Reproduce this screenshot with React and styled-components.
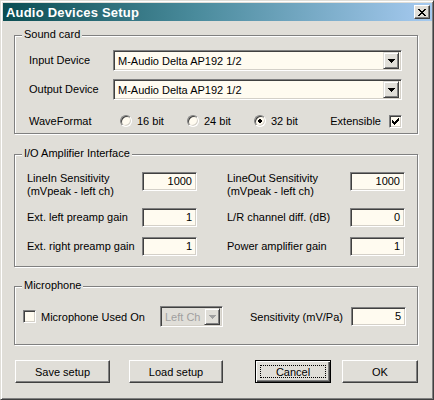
import React from 'react';
import styled, { createGlobalStyle } from 'styled-components';

const FACE = '#e0ded8';
const FIELD = '#fffbf0';

const GlobalStyle = createGlobalStyle`
  body {
    margin: 0;
    background: ${FACE};
    font-family: "Liberation Sans", Arial, sans-serif;
    font-size: 11px;
    color: #000;
  }
`;

const Window = styled.div`
  box-sizing: border-box;
  width: 434px;
  height: 400px;
  padding: 2px 1px 0 2px;
  background: ${FACE};
  border: 1px solid;
  border-color: ${FACE} #404040 #404040 ${FACE};
  box-shadow: inset 1px 1px 0 #fff, inset -1px -1px 0 #808080;
  display: flex;
  flex-direction: column;
`;

const TitleBar = styled.div`
  height: 18px;
  display: flex;
  align-items: center;
  justify-content: space-between;
  padding: 0 2px 0 3px;
  background: linear-gradient(90deg, #0b4d52 0%, #4a8b9c 45%, #a6caf0 100%);
`;

const Title = styled.span`
  color: #fff;
  font-weight: bold;
  font-size: 13px;
  letter-spacing: 0.2px;
`;

const CloseButton = styled.div`
  box-sizing: border-box;
  width: 16px;
  height: 14px;
  display: flex;
  align-items: center;
  justify-content: center;
  background: ${FACE};
  border: 1px solid;
  border-color: #fff #404040 #404040 #fff;
  box-shadow: inset -1px -1px 0 #808080;
`;

const Body = styled.div`
  display: flex;
  flex-direction: column;
  padding: 14px 0 0 11px;
`;

const Group = styled.div`
  position: relative;
  box-sizing: border-box;
  width: 404px;
  height: ${(p) => p.$h}px;
  margin-bottom: ${(p) => p.$gap || 0}px;
  border: 1px solid #808080;
  box-shadow: inset 1px 1px 0 #fff, 1px 1px 0 #fff;
  padding: ${(p) => p.$pad};
`;

const Legend = styled.span`
  position: absolute;
  top: -8px;
  left: 7px;
  padding: 0 2px;
  line-height: 13px;
  background: ${FACE};
`;

const SoundGrid = styled.div`
  display: grid;
  grid-template-columns: 84px 289px;
  grid-template-rows: 21px 21px 26px;
  row-gap: 8px;
  align-items: center;
`;

const Label = styled.span`
  white-space: nowrap;
  line-height: ${(p) => (p.$multi ? '13px' : '19px')};
`;

const Sunken = styled.div`
  box-sizing: border-box;
  border: 1px solid;
  border-color: #808080 #fff #fff #808080;
  box-shadow: inset 1px 1px 0 #404040, inset -1px -1px 0 #d4d0c8;
`;

const Combo = styled(Sunken)`
  width: ${(p) => p.$w || 289}px;
  height: 21px;
  display: flex;
  align-items: center;
  justify-content: space-between;
  padding: 2px;
  background: ${(p) => (p.$disabled ? FACE : FIELD)};
  color: ${(p) => (p.$disabled ? '#a0a0a0' : '#000')};
`;

const ComboText = styled.span`
  padding-left: 2px;
  white-space: nowrap;
`;

const ArrowButton = styled.div`
  box-sizing: border-box;
  width: 16px;
  height: 17px;
  display: flex;
  align-items: center;
  justify-content: center;
  background: ${FACE};
  border: 1px solid;
  border-color: ${FACE} #404040 #404040 ${FACE};
  box-shadow: inset 1px 1px 0 #fff, inset -1px -1px 0 #808080;
`;

const FormatRow = styled.div`
  display: flex;
  align-items: center;
  padding-left: 7px;
`;

const RadioItem = styled.div`
  width: 67px;
  display: flex;
  align-items: center;
  gap: 5px;
`;

const RadioCircle = styled.div`
  box-sizing: border-box;
  width: 12px;
  height: 12px;
  border-radius: 50%;
  border: 1px solid;
  border-color: #808080 #fff #fff #808080;
  box-shadow: inset 1px 1px 0 #404040, inset -1px -1px 0 #d4d0c8;
  background: ${FIELD};
  display: flex;
  align-items: center;
  justify-content: center;
`;

const CheckItem = styled.div`
  display: flex;
  align-items: center;
  gap: ${(p) => p.$gap}px;
  margin-left: ${(p) => p.$ml || '0'};
`;

const CheckBox = styled(Sunken)`
  width: 13px;
  height: 13px;
  display: flex;
  align-items: center;
  justify-content: center;
  background: ${FIELD};
`;

const IOGrid = styled.div`
  display: grid;
  grid-template-columns: 115px 55px 30px 123px 55px;
  row-gap: 10px;
  align-items: start;
`;

const Field = styled(Sunken)`
  width: 55px;
  height: 19px;
  padding: 0 4px;
  text-align: right;
  line-height: 17px;
  background: ${FIELD};
`;

const Spacer = styled.span``;

const MicRow = styled.div`
  display: flex;
  align-items: center;
  height: 21px;
`;

const MicSensitivity = styled.span`
  margin: 0 12px 0 27px;
  width: 89px;
  white-space: nowrap;
`;

const ButtonRow = styled.div`
  display: flex;
  padding-left: 1px;
`;

const Button = styled.div`
  box-sizing: border-box;
  width: ${(p) => p.$w}px;
  height: 23px;
  margin-right: ${(p) => p.$mr || 0}px;
  display: flex;
  align-items: center;
  justify-content: center;
  background: ${FACE};
  border: 1px solid;
  border-color: #fff #404040 #404040 #fff;
  box-shadow: inset -1px -1px 0 #808080, inset 1px 1px 0 ${FACE};
`;

const DefaultButton = styled(Button)`
  border: 1px solid #000;
  box-shadow: inset 1px 1px 0 #fff, inset -1px -1px 0 #404040, inset -2px -2px 0 #808080;
  padding: 4px;
`;

const FocusRect = styled.div`
  box-sizing: border-box;
  width: 100%;
  height: 100%;
  border: 1px dotted #000;
  display: flex;
  align-items: center;
  justify-content: center;
`;

const Glyph = ({ rows, color = '#000' }) => (
  <svg width={rows[0].length} height={rows.length} shapeRendering="crispEdges">
    {rows.flatMap((r, y) =>
      [...r].map((c, x) =>
        c === 'x' ? <rect key={`${x}-${y}`} x={x} y={y} width="1" height="1" fill={color} /> : null
      )
    )}
  </svg>
);

const X_ROWS = ['xx....xx', '.xx..xx.', '..xxxx..', '...xx...', '..xxxx..', '.xx..xx.', 'xx....xx'];
const ARROW_ROWS = ['xxxxxxx', '.xxxxx.', '..xxx..', '...x...'];
const CHECK_ROWS = ['......x', '.....xx', 'x...xxx', 'xx.xxx.', 'xxxxx..', '.xxx...', '..x....'];
const DOT_ROWS = ['.xx.', 'xxxx', 'xxxx', '.xx.'];

const DropDown = ({ text, w, disabled }) => (
  <Combo $w={w} $disabled={disabled}>
    <ComboText>{text}</ComboText>
    <ArrowButton>
      <Glyph rows={ARROW_ROWS} color={disabled ? '#a0a0a0' : '#000'} />
    </ArrowButton>
  </Combo>
);

const Radio = ({ label, checked }) => (
  <RadioItem>
    <RadioCircle>{checked && <Glyph rows={DOT_ROWS} />}</RadioCircle>
    <span>{label}</span>
  </RadioItem>
);

const ioRows = [
  ['LineIn Sensitivity\n(mVpeak - left ch)', '1000', 'LineOut Sensitivity\n(mVpeak - left ch)', '1000'],
  ['Ext. left preamp gain', '1', 'L/R channel diff. (dB)', '0'],
  ['Ext. right preamp gain', '1', 'Power amplifier gain', '1'],
];

const IOLabel = ({ text }) => {
  const lines = text.split('\n');
  return (
    <Label $multi={lines.length > 1}>
      {lines.map((l, i) => (
        <React.Fragment key={i}>
          {i > 0 && <br />}
          {l}
        </React.Fragment>
      ))}
    </Label>
  );
};

const App = () => (
  <>
    <GlobalStyle />
    <Window>
      <TitleBar>
        <Title>Audio Devices Setup</Title>
        <CloseButton>
          <Glyph rows={X_ROWS} />
        </CloseButton>
      </TitleBar>
      <Body>
        <Group $h={99} $gap={20} $pad="14px 14px 0 14px">
          <Legend>Sound card</Legend>
          <SoundGrid>
            <Label>Input Device</Label>
            <DropDown text="M-Audio Delta AP192 1/2" />
            <Label>Output Device</Label>
            <DropDown text="M-Audio Delta AP192 1/2" />
            <Label>WaveFormat</Label>
            <FormatRow>
              <Radio label="16 bit" />
              <Radio label="24 bit" />
              <Radio label="32 bit" checked />
              <CheckItem $gap={8} $ml="auto">
                <span>Extensible</span>
                <CheckBox>
                  <Glyph rows={CHECK_ROWS} />
                </CheckBox>
              </CheckItem>
            </FormatRow>
          </SoundGrid>
        </Group>

        <Group $h={113} $gap={19} $pad="17px 13px 0 12px">
          <Legend>I/O Amplifier Interface</Legend>
          <IOGrid>
            {ioRows.map(([l1, v1, l2, v2]) => (
              <React.Fragment key={l1}>
                <IOLabel text={l1} />
                <Field>{v1}</Field>
                <Spacer />
                <IOLabel text={l2} />
                <Field>{v2}</Field>
              </React.Fragment>
            ))}
          </IOGrid>
        </Group>

        <Group $h={59} $gap={15} $pad="19px 11px 0 8px">
          <Legend>Microphone</Legend>
          <MicRow>
            <CheckItem $gap={5}>
              <CheckBox />
              <span>Microphone Used On</span>
            </CheckItem>
            <CheckItem $gap={0} $ml="auto">
              <DropDown text="Left Ch" w={63} disabled />
            </CheckItem>
            <MicSensitivity>Sensitivity (mV/Pa)</MicSensitivity>
            <Field>5</Field>
          </MicRow>
        </Group>

        <ButtonRow>
          <Button $w={95} $mr={19}>Save setup</Button>
          <Button $w={94} $mr={32}>Load setup</Button>
          <DefaultButton $w={76} $mr={11}>
            <FocusRect>Cancel</FocusRect>
          </DefaultButton>
          <Button $w={76}>OK</Button>
        </ButtonRow>
      </Body>
    </Window>
  </>
);

export default App;
